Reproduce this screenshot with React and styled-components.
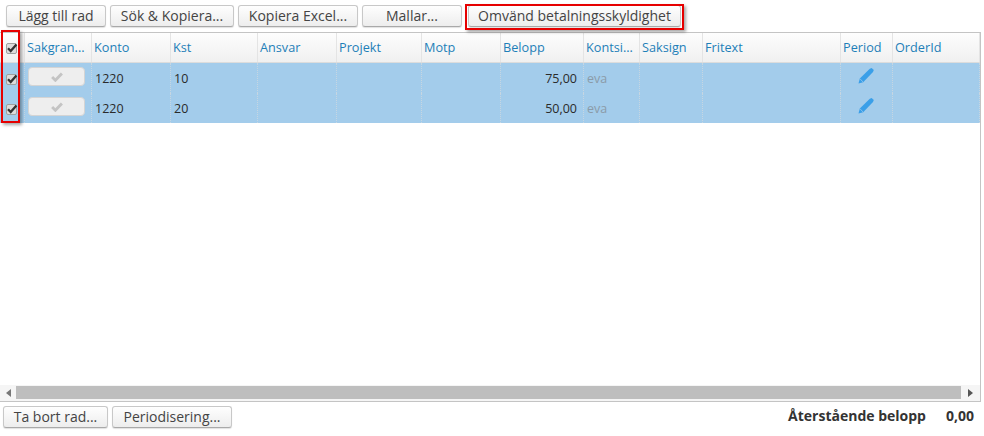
import React from "react";
import styled, { createGlobalStyle } from "styled-components";

const Global = createGlobalStyle`
  html, body { margin: 0; padding: 0; background: #fff; }
  body { font-family: "Open Sans", "Liberation Sans", sans-serif; font-size: 12px; color: #333; }
  * { box-sizing: border-box; }
`;

const COLS = "25px 67px 79px 87px 79px 85px 79px 83px 56px 63px 138px 52px 87px";

const Page = styled.div`
  position: relative;
  width: 984px;
  height: 436px;
  overflow: hidden;
  display: flex;
  flex-direction: column;
`;

const Toolbar = styled.div`
  display: flex;
  height: 32px;
  padding: 5px 0 0 6px;
  gap: 4px;
`;

const Button = styled.button`
  height: 22px;
  width: ${(p) => p.$w}px;
  margin-left: ${(p) => p.$ml || 0}px;
  padding: 0;
  border: 1px solid #c8c8c8;
  border-bottom-color: #a9a9a9;
  border-radius: 3px;
  background: linear-gradient(#fefefe, #ededed);
  box-shadow: 0 1px 1px rgba(0, 0, 0, 0.12);
  color: #444;
  font-family: "Open Sans", "Liberation Sans", sans-serif;
  font-size: 14px;
  line-height: 20px;
  white-space: nowrap;
`;

const HighlightFrame = styled.div`
  position: absolute;
  left: ${(p) => p.$x}px;
  top: ${(p) => p.$y}px;
  width: ${(p) => p.$w}px;
  height: ${(p) => p.$h}px;
  border: 2px solid #e60000;
  box-shadow: 2px 2px 3px rgba(0, 0, 0, 0.35);
  pointer-events: none;
`;

const Grid = styled.div`
  height: 370px;
  width: 981px;
  border: 1px solid #c4c4c4;
  border-left: none;
  display: flex;
  flex-direction: column;
  background: #fff;
`;

const HeaderRow = styled.div`
  display: grid;
  grid-template-columns: ${COLS};
  height: 30px;
  background: linear-gradient(#fdfdfd, #f0f0f0);
  border-bottom: 1px solid #dcdcdc;
`;

const HeaderCell = styled.div`
  display: flex;
  align-items: center;
  padding: 0 0 1px 2px;
  border-right: 1px solid #e4e4e4;
  color: #1e7fb8;
  font-size: 12.7px;
  white-space: nowrap;
  overflow: hidden;
`;

const CheckHeaderCell = styled(HeaderCell)`
  padding: 2px 0 0 6px;
`;

const DataRow = styled.div`
  display: grid;
  grid-template-columns: ${COLS};
  height: 30px;
  background: #a3cceb;
`;

const Cell = styled.div`
  display: flex;
  align-items: center;
  justify-content: ${(p) => p.$align || "flex-start"};
  padding: 0 6px 0 3px;
  border-right: 1px dotted #c6d6e2;
  color: ${(p) => (p.$muted ? "#8b9ba8" : "#2a2a2a")};
  font-size: 12.5px;
  white-space: nowrap;
`;

const CheckCell = styled(Cell)`
  padding: 2px 0 0 6px;
`;

const StateCell = styled(Cell)`
  padding: 0 0 3px 3px;
`;

const IconCell = styled(Cell)`
  padding: 0 0 6px 0;
`;

const CheckBox = styled.span`
  position: relative;
  display: block;
  width: 11px;
  height: 11px;
  border: 1px solid #a0a0a0;
  border-radius: 2px;
  background: #dcdcdc;
`;

const CheckMark = styled.svg`
  position: absolute;
  left: -1px;
  top: -2px;
  width: 12px;
  height: 12px;
`;

const StateButton = styled.span`
  display: flex;
  align-items: center;
  justify-content: center;
  width: 57px;
  height: 19px;
  border: 1px solid #d4d4d4;
  border-radius: 4px;
  background: #eeeeee;
`;

const Spacer = styled.div`
  flex: 1;
`;

const ScrollBar = styled.div`
  display: flex;
  align-items: center;
  height: 16px;
  padding: 1px 0 2px;
  background: #f5f5f5;
`;

const Arrow = styled.div`
  width: ${(p) => p.$w}px;
  display: flex;
  justify-content: center;
`;

const Thumb = styled.div`
  flex: 1;
  height: 13px;
  background: #bebebe;
`;

const Footer = styled.div`
  display: flex;
  align-items: center;
  height: 32px;
  padding: 2px 10px 4px 3px;
  gap: 4px;
`;

const Summary = styled.div`
  margin-left: auto;
  display: flex;
  gap: 20px;
  font-weight: 700;
  font-size: 14px;
  color: #333;
  padding-bottom: 3px;
`;

const Check = () => (
  <CheckBox>
    <CheckMark viewBox="0 0 12 12">
      <path d="M2 6.2 L4.7 9 L10.4 2.6" fill="none" stroke="#333" strokeWidth="2.3" />
    </CheckMark>
  </CheckBox>
);

const Pencil = () => (
  <svg width="17" height="17" viewBox="0 0 17 17">
    <path d="M0.5 16.5 L1.8 11.6 L11.8 1.8 L13.6 0.9 L15.8 3.1 L15 5 L5.2 15.2 Z" fill="#3a9fe8" />
    <path d="M1.8 11.6 L5.2 15.2" stroke="#a3cceb" strokeWidth="0.7" />
  </svg>
);

const headers = ["Konto", "Kst", "Ansvar", "Projekt", "Motp", "Belopp", "Kontsi...", "Saksign", "Fritext", "Period", "OrderId"];
const rows = [
  { konto: "1220", kst: "10", belopp: "75,00" },
  { konto: "1220", kst: "20", belopp: "50,00" },
];

export default function App() {
  return (
    <Page>
      <Global />
      <Toolbar>
        <Button $w={100}>Lägg till rad</Button>
        <Button $w={124}>Sök &amp; Kopiera...</Button>
        <Button $w={120}>Kopiera Excel...</Button>
        <Button $w={100}>Mallar...</Button>
        <Button $w={213} $ml={2}>Omvänd betalningsskyldighet</Button>
      </Toolbar>
      <Grid>
        <HeaderRow>
          <CheckHeaderCell><Check /></CheckHeaderCell>
          <HeaderCell>Sakgran...</HeaderCell>
          {headers.map((h) => (
            <HeaderCell key={h}>{h}</HeaderCell>
          ))}
        </HeaderRow>
        {rows.map((r) => (
          <DataRow key={r.kst}>
            <CheckCell><Check /></CheckCell>
            <StateCell>
              <StateButton>
                <svg width="12" height="10" viewBox="0 0 11 9">
                  <path d="M1 4.5 L4 7.5 L10 1.2" fill="none" stroke="#c4c4c4" strokeWidth="2.6" />
                </svg>
              </StateButton>
            </StateCell>
            <Cell>{r.konto}</Cell>
            <Cell>{r.kst}</Cell>
            <Cell />
            <Cell />
            <Cell />
            <Cell $align="flex-end">{r.belopp}</Cell>
            <Cell $muted>eva</Cell>
            <Cell />
            <Cell />
            <IconCell $align="center"><Pencil /></IconCell>
            <Cell />
          </DataRow>
        ))}
        <Spacer />
        <ScrollBar>
          <Arrow $w={16}>
            <svg width="5" height="8" viewBox="0 0 5 8"><path d="M5 0 L0 4 L5 8 Z" fill="#777" /></svg>
          </Arrow>
          <Thumb />
          <Arrow $w={19}>
            <svg width="5" height="8" viewBox="0 0 5 8"><path d="M0 0 L5 4 L0 8 Z" fill="#555" /></svg>
          </Arrow>
        </ScrollBar>
      </Grid>
      <Footer>
        <Button $w={105}>Ta bort rad...</Button>
        <Button $w={120}>Periodisering...</Button>
        <Summary>
          <span>Återstående belopp</span>
          <span>0,00</span>
        </Summary>
      </Footer>
      <HighlightFrame $x={465} $y={4} $w={219} $h={26} />
      <HighlightFrame $x={1} $y={30} $w={19} $h={93} />
    </Page>
  );
}
